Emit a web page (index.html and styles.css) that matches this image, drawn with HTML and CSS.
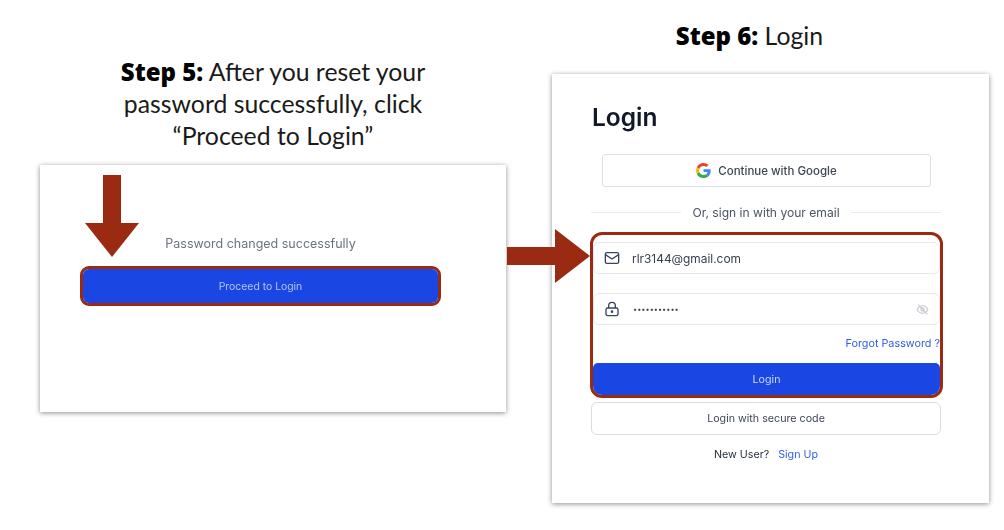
FILE: index.html
```html
<!DOCTYPE html>
<html lang="en">

<head>
    <meta charset="UTF-8">
    <meta name="viewport" content="width=device-width, initial-scale=1.0">
    <title>Password reset steps</title>
    <link rel="stylesheet" href="styles.css">
</head>

<body>
    <div class="steps">
        <section class="step step-five">
            <h2 class="step-title"><strong>Step 5:</strong> After you reset your<br>password successfully, click<br>“Proceed to Login”</h2>
            <div class="shot shot-success">
                <p class="success-text">Password changed successfully</p>
                <div class="proceed-outline">
                    <button class="proceed-button">Proceed to Login</button>
                </div>
            </div>
        </section>

        <section class="step step-six">
            <h2 class="step-title"><strong>Step 6:</strong> Login</h2>
            <div class="shot shot-login">
                <h1 class="login-title">Login</h1>
                <button class="google-button">
                    <svg width="15" height="15" viewBox="0 0 48 48">
                        <path fill="#EA4335" d="M24 9.500c3.500 0 6.700 1.300 9.200 3.600l6.900-6.900C35.900 2.400 30.500 0 24 0 14.600 0 6.500 5.400 2.600 13.200l8 6.200C12.500 13.600 17.800 9.500 24 9.500z"/>
                        <path fill="#4285F4" d="M47 24.500c0-1.600-.2-3.200-.4-4.700H24v9h13c-.6 3-2.200 5.500-4.800 7.200l7.700 6c4.500-4.200 7.100-10.300 7.100-17.500z"/>
                        <path fill="#FBBC05" d="M10.600 28.600c-.5-1.400-.8-3-.8-4.600s.3-3.200.8-4.600l-8-6.200C.9 16.500 0 20.100 0 24s.9 7.500 2.600 10.800l8-6.200z"/>
                        <path fill="#34A853" d="M24 48c6.500 0 11.900-2.100 15.900-5.900l-7.700-6c-2.200 1.400-4.900 2.300-8.200 2.300-6.200 0-11.500-4.100-13.400-9.800l-8 6.200C6.500 42.600 14.600 48 24 48z"/>
                    </svg>
                    Continue with Google
                </button>
                <div class="divider"><span>Or, sign in with your email</span></div>

                <div class="login-highlight">
                    <div class="field">
                        <svg class="field-icon" width="16" height="16" viewBox="0 0 24 24"><rect x="2" y="4" width="20" height="16" rx="2.500"/><path d="M22 7l-10 6.500L2 7"/></svg>
                        <span>rlr3144@gmail.com</span>
                    </div>
                    <div class="field field-password">
                        <svg class="field-icon" width="16" height="16" viewBox="0 0 24 24"><rect x="3" y="10.500" width="18" height="11.500" rx="2.500"/><path d="M7 10.500V7a5 5 0 0 1 10 0v3.500"/><circle cx="12" cy="16" r="1"/></svg>
                        <span class="dots">•••••••••••</span>
                        <svg class="eye-icon" width="13" height="13" viewBox="0 0 24 24"><path d="M2 12s3.600-7 10-7 10 7 10 7-3.600 7-10 7-10-7-10-7z"/><circle cx="12" cy="12" r="3"/><path d="M4 3l17 18"/></svg>
                    </div>
                    <a class="forgot-link" href="#">Forgot Password ?</a>
                    <button class="login-button">Login</button>
                </div>

                <button class="code-button">Login with secure code</button>
                <p class="signup-line">New User? <a href="#">Sign Up</a></p>
            </div>
        </section>
    </div>
    <svg class="arrow arrow-down" width="54" height="82" viewBox="0 0 54 82"><path d="M18 0h18v48h18L27 82 0 48h18z"/></svg>
    <svg class="arrow arrow-right" width="83" height="54" viewBox="0 0 83 54"><path d="M0 18h48V0l35 27-35 27V36H0z"/></svg>
</body>

</html>
```

FILE: styles.css
```css
body {
    margin: 0;
    background: #fff;
    font-family: 'Inter', 'Liberation Sans', sans-serif;
    position: relative;
    height: 530px;
    overflow: hidden;
}

button {
    font-family: inherit;
    cursor: pointer;
}

.steps {
    display: flex;
    gap: 46px;
    padding-left: 40px;
}

.step-five {
    width: 466px;
    padding-top: 56px;
}

.step-six {
    width: 437px;
    padding-top: 20px;
}

.step-title {
    margin: 0;
    color: #1a1a1a;
    font-family: 'Lato', sans-serif;
    font-size: 24.800px;
    font-weight: 400;
    line-height: 32px;
    text-align: center;
}

.step-title strong {
    color: #000;
    font-family: 'Open Sans', sans-serif;
    font-size: 24px;
    font-weight: 800;
    line-height: 1;
}

.step-five .step-title {
    margin-bottom: 13px;
}

.step-six .step-title {
    margin-bottom: 22px;
    padding-right: 42px;
}

.shot {
    position: relative;
    box-sizing: border-box;
    background: #fff;
    box-shadow: 0 1px 5px rgba(0, 0, 0, 0.45);
    filter: blur(0.3px);
}

.shot-success {
    height: 247px;
    padding: 71px 65px 0 40px;
}

.success-text {
    margin: 0 0 14px;
    color: #6b7280;
    font-size: 12.500px;
    line-height: 16px;
    text-align: center;
}

.proceed-outline {
    box-sizing: border-box;
    height: 40px;
    border: 3px solid #9a2b12;
    border-radius: 9px;
    overflow: hidden;
}

.proceed-button {
    display: block;
    width: 100%;
    height: 100%;
    padding: 1px 0 0;
    border: none;
    background: #1a46e4;
    color: #b4c5f7;
    font-size: 10.400px;
}

.arrow {
    position: absolute;
    fill: #9a2b12;
}

.arrow-down {
    left: 85px;
    top: 175px;
}

.arrow-right {
    left: 507px;
    top: 229px;
}

.shot-login {
    height: 429px;
    padding: 28px 48px 0 39px;
}

.login-title {
    margin: 0 0 22px 1px;
    color: #111827;
    font-size: 24.500px;
    font-weight: 600;
    line-height: 30px;
}

.google-button {
    display: flex;
    align-items: center;
    justify-content: center;
    gap: 7px;
    box-sizing: border-box;
    width: 329px;
    height: 33px;
    margin: 0 0 0 11px;
    border: 1px solid #dfe1e8;
    border-radius: 3px;
    background: #fff;
    color: #3f4654;
    font-size: 11.500px;
    font-weight: 500;
}

.divider {
    display: flex;
    align-items: center;
    gap: 11px;
    height: 16px;
    margin: 17px 0 12px;
    color: #4b5563;
    font-size: 12.100px;
}

.divider::before,
.divider::after {
    content: "";
    flex: 1;
    border-top: 1px solid #e8eaee;
}

.login-highlight {
    display: flex;
    flex-direction: column;
    box-sizing: border-box;
    width: 353px;
    height: 166px;
    margin-left: -1px;
    padding: 7px 0 0;
    border: 3px solid #9a2b12;
    border-radius: 12px;
    overflow: hidden;
}

.field {
    display: flex;
    align-items: center;
    box-sizing: border-box;
    height: 32px;
    padding: 0 10px;
    border: 1px solid #e6e8ee;
    border-radius: 6px;
    color: #374151;
    font-size: 11.900px;
}

.field span {
    margin-left: 12px;
}

.field-password {
    margin-top: 19px;
}

.field-icon {
    fill: none;
    stroke: #374560;
    stroke-width: 2;
    flex: none;
}

.field .dots {
    font-size: 7.400px;
    margin-left: 13px;
}

.eye-icon {
    margin-left: auto;
    fill: none;
    stroke: #c4c7cc;
    stroke-width: 2;
}

.forgot-link {
    align-self: flex-end;
    margin-top: 11px;
    color: #2f5be7;
    font-size: 10.800px;
    line-height: 16px;
    text-decoration: none;
}

.login-button {
    height: 32px;
    margin-top: 11px;
    border: none;
    border-radius: 5px;
    background: #1a46e4;
    color: #cdd8fa;
    font-size: 10.700px;
    flex: none;
}

.code-button {
    display: block;
    box-sizing: border-box;
    width: 350px;
    height: 33px;
    margin-top: 4px;
    border: 1px solid #d9dce5;
    border-radius: 6px;
    background: #fff;
    color: #3f4654;
    font-size: 10.700px;
}

.signup-line {
    width: 350px;
    margin: 11px 0 0;
    color: #1f2937;
    font-size: 10.700px;
    line-height: 17px;
    text-align: center;
}

.signup-line a {
    margin-left: 6px;
    color: #2f5be7;
    text-decoration: none;
}
```
